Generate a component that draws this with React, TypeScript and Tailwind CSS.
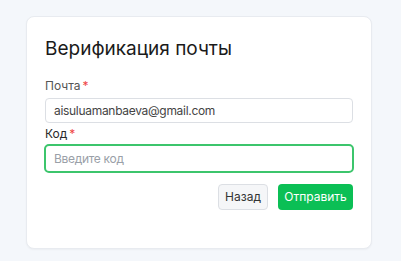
import React from 'react';

const App: React.FC = () => {
    return (
        <div className="w-[401px] h-[261px] bg-[#f4f7fb] pt-[16px] pl-[26px] font-['Inter',sans-serif]">
            <div className="w-[346px] h-[233px] bg-white rounded-lg border border-[#e8ebf0] shadow-[0_1px_2px_rgba(0,0,0,0.04)] pt-[20px] px-[18px]">
                <h1 className="text-[19px] leading-[24px] text-[#1a1a1a] font-normal">Верификация почты</h1>

                <div className="mt-[17px]">
                    <label className="block text-[12px] leading-[16px] text-[#555]">
                        Почта<span className="ml-[2px] text-[#ef4444]">*</span>
                    </label>
                    <div className="mt-[4px] h-[25px] w-[308px] border border-[#dcdfe4] rounded-[4px] px-[8px] flex items-center text-[12px] tracking-[-0.3px] text-[#444]">
                        aisuluamanbaeva@gmail.com
                    </div>
                </div>

                <div className="mt-[3px]">
                    <label className="block text-[12px] leading-[16px] text-[#2a2a2a]">
                        Код<span className="ml-[2px] text-[#ef4444]">*</span>
                    </label>
                    <input
                        placeholder="Введите код"
                        className="mt-[2px] h-[29px] w-[310px] -ml-px border-2 border-[#3cc56c] rounded-[5px] px-[8px] text-[12px] tracking-[-0.3px] outline-none placeholder:text-[#9aa0a8]"
                    />
                </div>

                <div className="mt-[11px] w-[308px] flex justify-end gap-[10px]">
                    <button className="h-[26px] w-[50px] bg-[#f5f6f8] border border-[#dcdfe4] rounded-[4px] text-[12px] text-[#333]">
                        Назад
                    </button>
                    <button className="h-[26px] w-[75px] bg-[#0bbf55] rounded-[4px] text-[12px] text-white">
                        Отправить
                    </button>
                </div>
            </div>
        </div>
    );
};

export default App;
